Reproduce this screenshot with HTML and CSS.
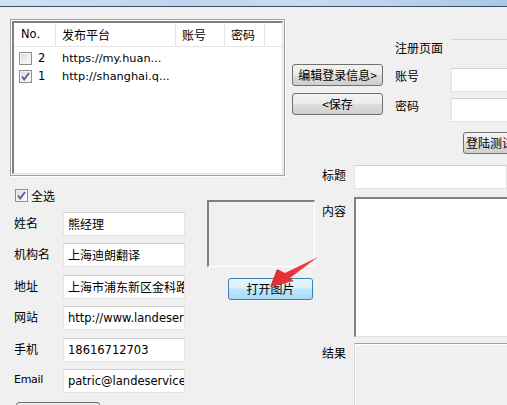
FILE: index.html
```html
<!DOCTYPE html>
<html>
<head>
<meta charset="utf-8">
<link rel="stylesheet" href="styles.css">
</head>
<body>
<div class="window">
  <div class="titlebar"></div>
  <div class="main">
    <div class="left">
      <div class="groupbox">
        <div class="list">
          <div class="lhead">
            <div class="hc c-no">No.</div>
            <div class="hc c-site">发布平台</div>
            <div class="hc c-acc">账号</div>
            <div class="hc c-pwd">密码</div>
          </div>
          <div class="lrow">
            <span class="chk"></span><span class="num">2</span><span class="url">https://my.huan...</span>
          </div>
          <div class="lrow">
            <span class="chk checked"><svg viewBox="0 0 13 13" width="13" height="13"><path d="M3 6.5 L5.2 9.5 L10 3" fill="none" stroke="#4a5f97" stroke-width="1.8"/></svg></span><span class="num">1</span><span class="url">http://shanghai.q...</span>
          </div>
        </div>
      </div>
      <div class="lower">
        <div class="fields">
          <div class="selall"><span class="chk checked"><svg viewBox="0 0 13 13" width="13" height="13"><path d="M3 6.5 L5.2 9.5 L10 3" fill="none" stroke="#4a5f97" stroke-width="1.8"/></svg></span><span class="cn">全选</span></div>
          <div class="frow"><span class="flabel cn">姓名</span><div class="input cn">熊经理</div></div>
          <div class="frow"><span class="flabel cn">机构名</span><div class="input cn">上海迪朗翻译</div></div>
          <div class="frow plus"><span class="flabel cn">地址</span><div class="input cn">上海市浦东新区金科路</div></div>
          <div class="frow"><span class="flabel cn">网站</span><div class="input">http://www.landeservice.com</div></div>
          <div class="frow plus"><span class="flabel cn">手机</span><div class="input">18616712703</div></div>
          <div class="frow"><span class="flabel">Email</span><div class="input">patric@landeservice.com</div></div>
          <div class="bottombtn"></div>
        </div>
        <div class="imgcol">
          <div class="imgbox"></div>
          <div class="openbtn cn">打开图片</div>
        </div>
      </div>
    </div>
    <div class="right">
      <div class="top">
        <div class="btns">
          <div class="btn cn">编辑登录信息&gt;</div>
          <div class="btn cn">&lt;保存</div>
        </div>
        <div class="login">
          <div class="lrow2 reg"><span class="llabel cn">注册页面</span><div class="regfield"></div></div>
          <div class="lrow2 r-acc"><span class="llabel cn">账号</span><div class="input wide"></div></div>
          <div class="lrow2 r-pwd"><span class="llabel cn">密码</span><div class="input wide"></div></div>
          <div class="btn testbtn cn">登陆测试</div>
        </div>
      </div>
      <div class="bottom">
        <div class="brow r-title"><span class="blabel cn">标题</span><div class="input wide2"></div></div>
        <div class="brow r-content"><span class="blabel cn">内容</span><div class="textarea"></div></div>
        <div class="brow r-result"><span class="blabel cn">结果</span><div class="result"></div></div>
      </div>
    </div>
  </div>
  <svg class="arrow" width="507" height="405" viewBox="0 0 507 405">
    <defs>
      <linearGradient id="ag" x1="0" y1="0" x2="1" y2="0">
        <stop offset="0" stop-color="#e02a2f"/>
        <stop offset="1" stop-color="#f0464a"/>
      </linearGradient>
    </defs>
    <polygon points="318,257 290,278 294,281 270,287 277,269 285,273" fill="url(#ag)"/>
  </svg>
</div>
</body>
</html>
```
FILE: styles.css
```css
html, body {
  margin: 0;
  padding: 0;
}
body {
  background: #f0f0f0;
  font-family: "DejaVu Sans", "Noto Sans CJK SC", sans-serif;
  font-size: 11px;
  color: #000;
}
.cn {
  font-family: "Noto Sans CJK SC", "DejaVu Sans", sans-serif;
  font-size: 12px;
}
.window {
  position: relative;
  width: 507px;
  height: 405px;
  overflow: hidden;
  background: #f0f0f0;
}
.titlebar {
  height: 6px;
  background: linear-gradient(90deg, #cfe3f6 0%, #bdd5ee 35%, #c7dcf2 60%, #a9c7e8 100%);
  border-bottom: 1px solid #3d4b5c;
}
.main {
  display: flex;
  align-items: flex-start;
  padding-left: 10px;
}
.left {
  width: 275px;
  flex: none;
}
.groupbox {
  margin-top: 12px;
  height: 153px;
  border: 1px solid #a0a0a0;
  box-shadow: inset 1px 1px 0 #fff, 1px 1px 0 #fff;
  padding: 1px;
}
.list {
  height: 150px;
  background: #fff;
  border-top: 2px solid #808080;
  border-left: 2px solid #808080;
  border-right: 1px solid #e3e3e3;
  border-bottom: 1px solid #e3e3e3;
}
.lhead {
  display: flex;
  height: 23px;
  border-bottom: 1px solid #e5e5e5;
}
.hc {
  height: 23px;
  line-height: 23px;
  border-right: 1px solid #e5e5e5;
  box-sizing: border-box;
  padding-left: 6px;
}
.c-no { width: 42px; padding-left: 7px; font-size: 11.5px; }
.c-site { width: 120px; font-family: "Noto Sans CJK SC", sans-serif; font-size: 12px; }
.c-acc { width: 49px; font-family: "Noto Sans CJK SC", sans-serif; font-size: 12px; }
.c-pwd { width: 40px; font-family: "Noto Sans CJK SC", sans-serif; font-size: 12px; }
.lrow {
  display: flex;
  align-items: center;
  height: 18px;
  padding-left: 5px;
}
.lhead + .lrow { margin-top: 2px; }
.chk {
  display: inline-block;
  width: 11px;
  height: 11px;
  border: 1px solid #8f8f8f;
  background: linear-gradient(135deg, #d8d8d8 0%, #f4f4f4 70%, #fff 100%);
  box-shadow: inset 0 0 0 1px #f4f4f4;
  position: relative;
  flex: none;
}
.chk svg {
  position: absolute;
  left: -1px;
  top: -1px;
}
.num {
  margin-left: 6px;
  width: 24px;
  font-size: 11.5px;
}
.url {
  font-size: 11.3px;
}
.lower {
  display: flex;
  align-items: flex-start;
  margin-top: 13px;
}
.fields {
  width: 175px;
  flex: none;
}
.selall {
  display: flex;
  align-items: center;
  height: 13px;
  padding-left: 5px;
}
.selall .cn { margin-left: 3px; }
.frow {
  display: flex;
  align-items: center;
  height: 24px;
  margin-top: 7px;
}
.selall + .frow { margin-top: 10px; }
.frow.plus { margin-top: 8px; }
.flabel {
  width: 49px;
  padding-left: 4px;
  padding-bottom: 3px;
  flex: none;
}
.flabel:not(.cn) { font-size: 11px; letter-spacing: -0.3px; }
.input {
  box-sizing: border-box;
  height: 24px;
  width: 122px;
  background: #fff;
  border: 1px solid #e2e2e2;
  border-top-color: #cfcfcf;
  padding-left: 4px;
  line-height: 22px;
  white-space: nowrap;
  overflow: hidden;
  font-size: 11.5px;
}
.input.cn { font-size: 12px; }
.bottombtn {
  margin-top: 9px;
  margin-left: 6px;
  width: 84px;
  height: 20px;
  box-sizing: border-box;
  border: 1px solid #707070;
  border-radius: 3px;
  background: #ececec;
}
.imgcol {
  margin-left: 22px;
  margin-top: 11px;
  width: 108px;
  flex: none;
}
.imgbox {
  box-sizing: border-box;
  height: 67px;
  width: 108px;
  border-top: 2px solid #808080;
  border-left: 2px solid #808080;
  border-right: 1px solid #fff;
  border-bottom: 1px solid #fff;
}
.openbtn {
  box-sizing: border-box;
  margin-top: 11px;
  margin-left: 21px;
  width: 85px;
  height: 22px;
  border: 1px solid #3c7fb1;
  border-radius: 3px;
  background: linear-gradient(180deg, #eaf6fd 0%, #d9f0fc 45%, #bee6fd 50%, #a7d9f5 100%);
  text-align: center;
  line-height: 20px;
}
.right {
  flex: 1;
  min-width: 0;
}
.top {
  display: flex;
  align-items: flex-start;
}
.btns {
  margin-left: 7px;
  margin-top: 57px;
  width: 91px;
  flex: none;
  display: flex;
  flex-direction: column;
  gap: 7px;
}
.btn {
  box-sizing: border-box;
  height: 22px;
  border: 1px solid #707070;
  border-radius: 3px;
  background: linear-gradient(180deg, #f2f2f2 0%, #ebebeb 48%, #dddddd 52%, #cfcfcf 100%);
  text-align: center;
  line-height: 20px;
  white-space: nowrap;
}
.login {
  margin-left: 12px;
  margin-top: 32px;
  flex: none;
  width: 200px;
}
.lrow2 {
  display: flex;
  align-items: flex-start;
  height: 24px;
}
.llabel {
  width: 56px;
  flex: none;
  line-height: 16px;
}
.reg .llabel { padding-top: 1px; }
.r-acc { margin-top: 5px; }
.r-pwd { margin-top: 6px; }
.regfield {
  width: 80px;
  height: 23px;
  border-top: 1px solid #d4d4d4;
}
.input.wide { width: 90px; }
.testbtn {
  margin-top: 10px;
  margin-left: 68px;
  width: 52px;
  text-align: left;
  padding-left: 2px;
  overflow: hidden;
}
.bottom {
  margin-left: 37px;
  margin-top: 11px;
}
.brow {
  display: flex;
  align-items: flex-start;
}
.blabel {
  width: 32px;
  flex: none;
  line-height: 16px;
}
.r-title .blabel { padding-top: 2px; }
.input.wide2 { width: 200px; }
.r-content { margin-top: 8px; }
.r-content .blabel { padding-top: 6px; }
.textarea {
  box-sizing: border-box;
  width: 200px;
  height: 140px;
  background: #fff;
  border-top: 2px solid #808080;
  border-left: 2px solid #808080;
  border-bottom: 1px solid #e3e3e3;
}
.r-result { margin-top: 6px; }
.r-result .blabel { padding-top: 2px; }
.result {
  box-sizing: border-box;
  width: 200px;
  height: 70px;
  border-top: 1px solid #a0a0a0;
  border-left: 1px solid #d4d4d4;
  box-shadow: inset 1px 1px 0 #fff;
}
.arrow {
  position: absolute;
  left: 0;
  top: 0;
  pointer-events: none;
}
```
